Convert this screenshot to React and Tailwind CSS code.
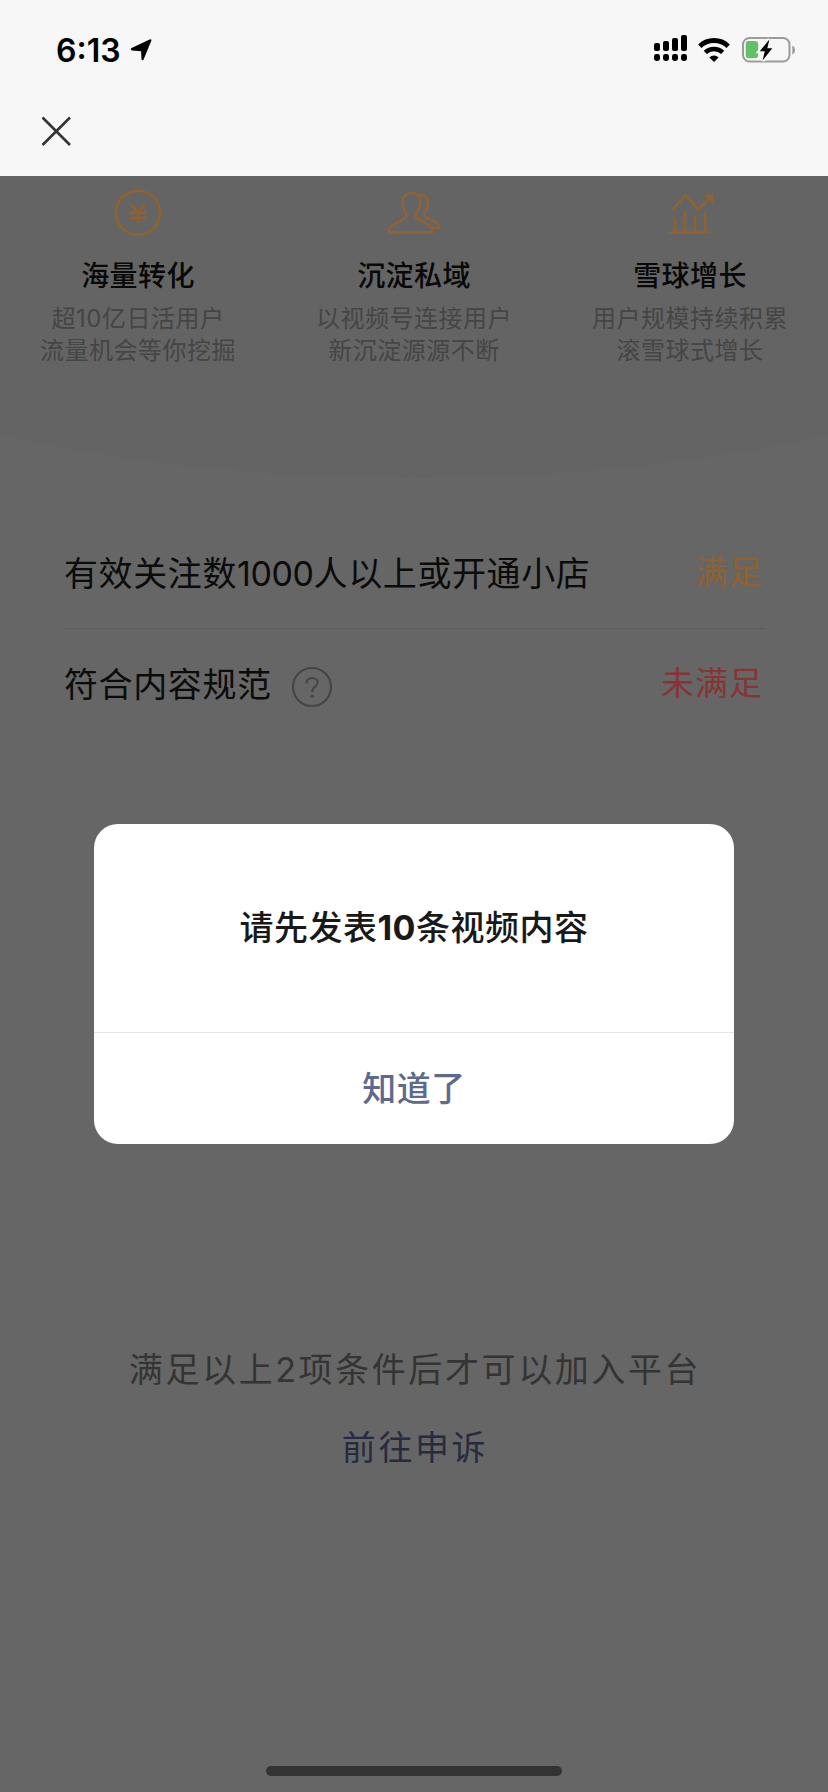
import React from 'react';

// --- Icons ---

const LocationIcon = () => (
    <svg className="w-6 h-6" viewBox="0 0 24 24">
        <path d="M22.3 2.8 14.6 21.6Q13.4 22.8 12.5 21.4L12.1 13.2 3.2 12.6Q0.6 11.4 2.6 10L20.6 1.4Q23.2 0.8 22.3 2.8Z" fill="#000" />
    </svg>
);

const SignalIcon = () => (
    <svg className="w-[33px] h-[26px]" viewBox="0 0 33 26" fill="#000">
        <rect x="0" y="8" width="6" height="8" rx="2" />
        <rect x="9" y="6" width="6" height="10" rx="2" />
        <rect x="18" y="3" width="6" height="13" rx="2" />
        <rect x="27" y="0" width="6" height="16" rx="2" />
        <rect x="0" y="19" width="6" height="7" rx="2.4" />
        <rect x="9" y="19" width="6" height="7" rx="2.4" />
        <rect x="18" y="19" width="6" height="7" rx="2.4" />
        <rect x="27" y="19" width="6" height="7" rx="2.4" />
    </svg>
);

const WifiIcon = () => (
    <svg className="w-8 h-6" viewBox="0 0 32 24">
        <path d="M1.8 8.2A20.5 20.5 0 0 1 30.2 8.2" fill="none" stroke="#000" strokeWidth="4.8" />
        <path d="M7.3 14.4A12.5 12.5 0 0 1 24.7 14.4" fill="none" stroke="#000" strokeWidth="4.5" />
        <path d="M16 24 11.4 19.4A6.4 6.4 0 0 1 20.6 19.4Z" fill="#000" />
    </svg>
);

const BatteryIcon = () => (
    <svg className="w-[54px] h-[26px]" viewBox="0 0 54 26">
        <rect x="1" y="1" width="46.5" height="23.5" rx="6.5" fill="none" stroke="#9b9b9b" strokeWidth="2" />
        <path d="M50.3 8.6V17.4C52 16.6 53 15 53 13S52 9.4 50.3 8.6Z" fill="#9b9b9b" />
        <rect x="3.7" y="4" width="12.5" height="17.3" rx="3.2" fill="#64bf69" />
        <path d="M27.4 2.5 17.8 14.2H22.8L20.6 23.6 30.3 11.2H25.3Z" fill="#000" stroke="#f7f7f7" strokeWidth="4" paintOrder="stroke" />
    </svg>
);

const CloseIcon = () => (
    <svg className="w-8 h-8" viewBox="0 0 32 32" fill="none" stroke="#333" strokeWidth="2.6">
        <path d="M2.5 2.5 30 30M30 2.5 2.5 30" />
    </svg>
);

const YenIcon = () => (
    <svg className="w-14 h-12" viewBox="0 0 56 48" fill="none" stroke="#8f6230" strokeWidth="2.6">
        <circle cx="28" cy="23.8" r="22" />
        <path d="M21 15.3 28 23.3 35 15.3M28 23.3V34M19.5 23.6H36.5M19.5 28.8H36.5" />
    </svg>
);

const PeopleIcon = () => (
    <svg className="w-14 h-12" viewBox="0 0 56 48" fill="none" stroke="#8f6238" strokeWidth="2.6" strokeLinejoin="round">
        <path d="M25.5 4C19.8 4 16.3 8 16.3 13C16.3 18 17.5 21 20.3 24V27.5C20.3 31.2 4 34.8 3.4 40.5V43.4H46.3V40.5C45.7 34.8 29.6 31.2 29.6 27.5V24C33 21 34.6 18 34.6 13C34.6 8 31.2 4 25.5 4Z" />
        <path d="M32.4 6.8C37.6 4.8 42 7.8 42 13.4C42 17.6 40.8 20 38.3 23V26.2C38.3 29.5 51.8 31.5 52.6 36.4V39H45.5" />
    </svg>
);

const GrowthIcon = () => (
    <svg className="w-14 h-12" viewBox="0 0 56 48" fill="none" stroke="#8f6230" strokeWidth="2.6">
        <path d="M10.3 20.3 23.3 6.4 36.6 20 49.6 7.2M42.6 6.7H50V13.8" />
        <path d="M13 29V43M23 21.7V43M33 26.7V43M43 24.3V43M7 43.6H49" />
    </svg>
);

const HelpIcon = () => (
    <svg className="w-[42px] h-[42px]" viewBox="0 0 42 42" fill="none" stroke="#454545" strokeWidth="2.1">
        <circle cx="21" cy="21" r="19" />
        <path d="M15.6 17.2C15.6 13.6 18 12 21.2 12C24.4 12 26.6 14 26.6 16.7C26.6 20.5 21.2 20.7 21.2 25V26" />
        <circle cx="21.2" cy="30.2" r="1.6" fill="#454545" stroke="none" />
    </svg>
);

// --- Page sections ---

const Header = () => (
    <header className="h-44 bg-[#f7f7f7]">
        <div className="flex items-center h-[99px] pl-14 pr-8">
            <span className="text-[32px] leading-none font-semibold text-black pt-[2px]">6:13</span>
            <span className="ml-2"><LocationIcon /></span>
            <div className="flex items-center ml-auto">
                <span className="mb-[3px]"><SignalIcon /></span>
                <span className="ml-[11px]"><WifiIcon /></span>
                <span className="ml-[12px]"><BatteryIcon /></span>
            </div>
        </div>
        <button className="block ml-10 mt-4"><CloseIcon /></button>
    </header>
);

const features = [
    { icon: <YenIcon />, title: '海量转化', lines: ['超10亿日活用户', '流量机会等你挖掘'] },
    { icon: <PeopleIcon />, title: '沉淀私域', lines: ['以视频号连接用户', '新沉淀源源不断'] },
    { icon: <GrowthIcon />, title: '雪球增长', lines: ['用户规模持续积累', '滚雪球式增长'] },
];

const Features = () => (
    <section className="relative h-[302px] overflow-hidden">
        {/* curved bottom edge */}
        <div className="absolute bottom-0 -left-[414px] w-[1656px] h-[321px] bg-[#646464] rounded-bl-[50%_100%] rounded-br-[50%_100%]"></div>
        <div className="relative grid grid-cols-3 pt-[13px] text-center">
            {features.map(item => (
                <div key={item.title} className="flex flex-col items-center">
                    {item.icon}
                    <h3 className="mt-[19px] text-[28px] leading-10 font-medium tracking-[0.4px] text-[#080808]">{item.title}</h3>
                    <div className="mt-[7px] text-2xl leading-8 tracking-[0.5px] text-[#454545]">
                        {item.lines.map(line => <p key={line}>{line}</p>)}
                    </div>
                </div>
            ))}
        </div>
    </section>
);

const Requirements = () => (
    <section className="mx-16 pt-10">
        <div className="flex items-center justify-between h-[111px] pr-px border-b border-[#5b5b5b] text-[34px] tracking-[0.6px]">
            <span className="text-[#0b0b0b]">有效关注数<span className="tracking-[-0.4px]">1000</span>人以上或开通小店</span>
            <span className="text-[33px] tracking-[1px] text-[#8f6230]">满足</span>
        </div>
        <div className="flex items-center h-[110px] pr-px text-[34px] tracking-[0.6px]">
            <span className="text-[#0b0b0b]">符合内容规范</span>
            <span className="ml-[19px] mt-[5px]"><HelpIcon /></span>
            <span className="ml-auto text-[33px] tracking-[1px] text-[#873434]">未满足</span>
        </div>
    </section>
);

const Dialog = () => (
    <div className="w-[640px] h-80 mx-auto mt-[85px] bg-white rounded-3xl text-center text-[34px] font-medium tracking-[0.5px]">
        <p className="h-52 leading-[208px] text-[#191919]">
            请先发表<span className="font-bold">10</span>条视频内容
        </p>
        <button className="w-full h-28 border-t border-[#e5e5e5] text-[#5d6a8c]">知道了</button>
    </div>
);

const Footer = () => (
    <footer className="flex flex-col items-center grow mt-[201px] text-[34px] leading-[50px] tracking-[2.6px]">
        <p className="pl-[2px] text-[#343434]">满足以上2项条件后才可以加入平台</p>
        <a href="#" className="mt-7 pl-[2px] text-[#262b40]">前往申诉</a>
        <div className="mt-auto mb-4 w-[296px] h-[10px] rounded-full bg-[#333]"></div>
    </footer>
);

export default function App() {
    return (
        <div className="flex flex-col w-[828px] h-[1792px] overflow-hidden bg-[#666] font-['Inter','Noto_Sans_CJK_SC',sans-serif]">
            <Header />
            <Features />
            <Requirements />
            <Dialog />
            <Footer />
        </div>
    );
}
